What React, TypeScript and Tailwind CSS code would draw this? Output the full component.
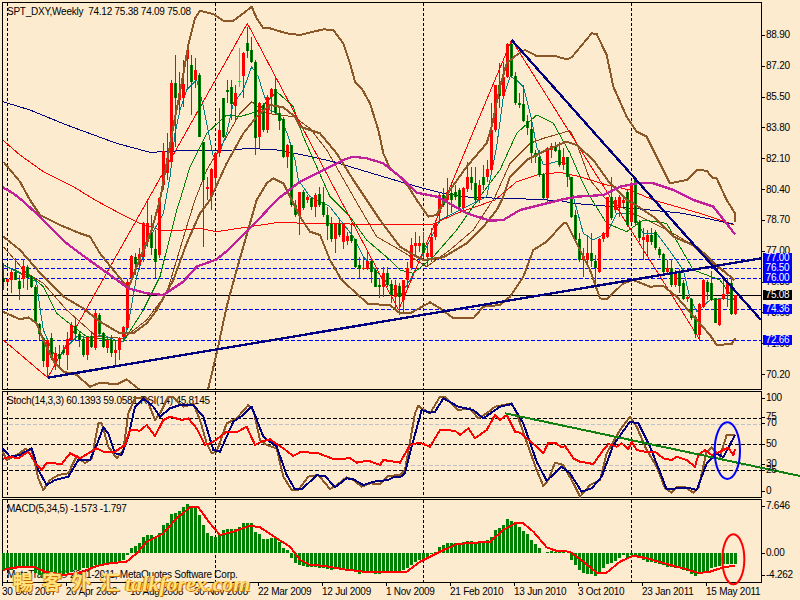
import React from "react";

type C = [number, number, number, number, string];
const early: C[] = ([
[235,245,190,270,"g"],[238,245,235,250,"r"],[215,240,205,280,"r"],[215,240,175,240,"g"],[243,268,225,300,"g"],[197,237,178,265,"r"],[200,235,195,270,"g"],[228,262,225,265,"g"],[262,365,255,370,"g"],[372,402,368,420,"g"],
[415,482,410,500,"g"],[420,500,420,530,"r"],[415,475,400,480,"g"],[460,495,440,510,"r"],[462,477,435,500,"g"],[450,460,435,465,"g"],[418,465,395,510,"r"],[375,420,365,430,"r"],[378,402,355,420,"g"],[402,420,395,440,"g"],
[418,465,410,470,"g"],[412,465,410,480,"r"],[408,440,395,445,"g"],[340,445,330,450,"r"],[345,402,340,405,"g"],[400,440,395,445,"g"],[420,445,410,460,"r"],[420,458,405,470,"g"],[450,458,420,500,"r"],[415,450,410,480,"r"],
[382,412,378,420,"r"],[245,385,238,390,"r"],[168,235,165,240,"r"],[172,192,160,225,"g"],[162,195,145,210,"r"],[70,170,65,185,"r"],[70,125,0,140,"r"],[98,143,45,165,"g"],[148,185,90,235,"g"],
] as C[]).map(([a, b, c, d, e]) => [a + 600, b + 600, c + 600, d + 600, e] as C);

const late: C[] = [
[595,765,590,775,"r"],[452,555,430,570,"r"],[475,520,400,540,"r"],[250,485,240,490,"r"],[250,295,165,440,"g"],[278,300,215,340,"r"],[252,295,180,320,"r"],[150,178,150,270,"r"],[195,245,165,345,"g"],[210,240,175,265,"r"],
[225,410,220,410,"g"],[425,540,425,740,"g"],[560,568,530,600,"r"],[508,590,505,630,"r"],[460,535,455,560,"r"],[390,460,325,470,"r"],[295,410,295,415,"g"],[270,275,240,310,"g"],[262,312,240,360,"g"],[278,318,255,360,"r"],
[243,245,145,260,"l"],[160,228,155,295,"r"],[130,152,80,175,"g"],[150,185,110,190,"g"],[185,415,180,465,"g"],[310,412,305,445,"r"],[315,390,310,395,"g"],[290,390,285,400,"r"],[268,290,265,340,"r"],[268,338,230,345,"g"],
[338,362,325,390,"g"],[358,470,350,475,"g"],[435,470,432,505,"r"],[435,615,435,620,"g"],[615,645,600,650,"g"],[575,645,575,705,"r"],[575,625,570,630,"g"],[590,600,585,610,"r"],[595,620,590,630,"g"],[585,620,580,650,"r"],
[582,615,560,620,"g"],[605,645,560,650,"g"],[645,678,620,720,"g"],[672,718,650,725,"g"],[672,718,670,758,"r"],[672,705,660,710,"g"],[672,725,670,748,"r"],[708,722,695,735,"r"],[705,722,670,730,"g"],[718,800,718,805,"g"],
[795,808,770,835,"g"],[805,807,770,810,"r"],[782,808,755,810,"r"],[782,815,778,850,"g"],[810,860,805,862,"g"],[855,862,835,895,"g"],[818,862,800,890,"r"],[818,855,800,860,"g"],[852,885,840,910,"g"],[855,890,840,925,"r"],
[858,890,850,945,"g"],[840,900,840,935,"r"],[805,840,785,865,"r"],[735,805,715,810,"r"],[730,738,695,765,"r"],[728,738,708,755,"r"],[728,760,695,775,"g"],[760,770,730,800,"r"],[710,770,685,785,"r"],[668,712,660,720,"r"],
[585,640,575,670,"r"],[585,615,565,620,"g"],[575,600,535,650,"r"],[580,600,545,640,"g"],[575,590,555,600,"g"],[570,620,565,625,"g"],[565,625,560,630,"r"],[530,568,485,575,"r"],[530,548,500,570,"g"],[548,600,500,610,"g"],
[555,600,540,610,"r"],[530,555,495,570,"g"],[508,530,480,545,"r"],[390,510,310,515,"r"],[255,390,255,395,"r"],[255,288,190,325,"g"],[232,288,185,292,"r"],[132,232,130,235,"r"],[132,228,120,230,"g"],[228,310,215,315,"g"],
[310,315,280,325,"g"],[312,362,255,365,"g"],[362,385,345,405,"g"],[388,458,355,490,"g"],[458,472,450,490,"g"],[472,525,450,530,"g"],[522,595,520,600,"g"],[445,595,440,605,"r"],[438,450,430,475,"r"],[438,452,425,455,"g"],
[450,495,425,500,"g"],[470,495,445,510,"r"],[472,530,470,560,"g"],[530,650,530,655,"g"],[645,720,630,725,"g"],[718,780,700,785,"g"],[768,780,745,830,"r"],[758,780,705,790,"r"],[760,782,700,800,"g"],[782,805,765,852,"g"],
[718,815,715,818,"r"],[700,718,695,725,"r"],[590,712,590,715,"r"],[590,655,530,660,"g"],[600,630,590,640,"r"],[590,625,585,650,"r"],[600,610,590,620,"r"],[575,675,570,680,"g"],[548,665,545,670,"r"],[540,670,535,675,"g"],
[665,715,660,725,"g"],[712,720,685,780,"r"],[705,725,690,770,"r"],[705,725,685,735,"g"],[695,745,690,750,"g"],[748,765,740,775,"g"],[762,815,760,820,"g"],[805,815,780,825,"r"],[805,855,778,860,"g"],[815,855,810,860,"r"],
[812,858,808,880,"g"],[848,898,840,900,"g"],[892,898,885,905,"r"],[898,955,895,960,"g"],[950,1002,945,1015,"g"],[912,1005,910,1020,"r"],[840,922,838,925,"r"],[845,875,840,900,"g"],[850,900,812,902,"g"],[895,968,893,970,"g"],
[898,975,895,978,"r"],[882,898,840,900,"r"],[850,882,835,922,"r"],[850,942,838,945,"g"],[885,942,885,945,"r"],
];
const candles = [...early, ...late];

const bandUpper = "10,485 60,545 90,600 120,645 180,675 240,700 270,710 300,760 340,810 385,865 410,800 455,690 480,600 520,380 545,250 565,135 585,55 600,32 640,42 670,62 700,62 730,40 755,20 770,55 790,85 810,85 860,100 900,105 970,88 1000,90 1030,130 1050,190 1065,245 1085,265 1110,310 1135,390 1150,460 1170,505 1200,530 1225,560 1250,600 1285,650 1310,645 1350,570 1400,500 1460,430 1475,380 1500,260 1520,190 1550,165 1575,150 1610,168 1665,168 1700,178 1715,172 1750,130 1775,100 1790,102 1820,165 1840,260 1880,350 1910,395 1940,410 1980,490 2010,550 2060,540 2090,510 2120,512 2135,532 2150,535 2180,600 2205,640 2205,665";
const bandMid = "10,710 60,750 130,830 190,890 250,925 300,965 360,1000 400,1000 440,970 470,930 520,840 560,730 600,640 630,600 680,490 730,400 770,350 810,315 850,322 885,350 900,380 960,400 1010,460 1060,540 1100,600 1140,660 1200,740 1250,770 1270,780 1330,772 1400,730 1450,680 1490,630 1510,590 1530,530 1580,480 1640,450 1700,425 1730,435 1780,480 1830,550 1880,600 1900,610 1960,650 2020,710 2090,740 2150,795 2203,840";
const bandLow = "8,935 60,958 85,952 110,970 130,1020 165,1090 190,1115 230,1125 270,1160 300,1148 350,1153 380,1138 420,1170 440,1200 610,1200 625,1165 650,1060 680,920 710,810 770,600 800,550 820,535 850,550 870,590 900,650 930,695 960,705 990,780 1025,840 1080,890 1105,912 1170,915 1200,940 1230,940 1290,907 1320,925 1360,955 1420,955 1450,920 1500,915 1530,890 1570,830 1600,750 1640,725 1690,670 1700,670 1730,730 1770,810 1800,895 1820,898 1870,850 1900,840 1950,860 1990,858 2030,890 2090,960 2130,1005 2150,1035 2195,1032 2206,1015";
const magenta = "8,562 40,580 65,600 120,650 200,730 260,775 330,825 385,865 440,880 490,885 550,845 590,800 650,778 690,745 760,675 830,600 900,545 970,510 1030,480 1060,470 1100,475 1150,490 1200,530 1250,578 1310,590 1330,600 1400,640 1470,662 1510,660 1560,630 1620,615 1680,600 1730,590 1810,585 1860,560 1920,548 1960,550 2020,570 2080,600 2140,620 2205,703";
const navyThin = "8,305 90,330 200,375 350,430 450,457 550,452 700,450 745,445 830,450 900,463 1000,485 1100,515 1200,545 1270,565 1330,580 1410,592 1610,598 1680,602 1720,610 1900,625 2050,640 2203,673";
const redThin = "8,420 60,465 130,515 220,560 285,600 350,635 420,670 480,690 550,690 600,685 650,695 750,680 830,668 950,670 1200,675 1300,672 1370,640 1485,600 1550,545 1610,525 1680,517 1740,530 1820,555 1890,570 1960,600 2100,640 2203,675";
const zigzag = "10,1020 143,1133 742,70 1196,930 1535,120 2100,1020";
const teal = "10,795 40,810 110,845 115,890 130,990 160,1060 180,1070 200,1040 230,1010 270,1012 310,1005 345,1020 370,1025 385,970 410,830 440,730 490,640 510,530 525,400 540,330 560,270 590,240 610,320 640,470 660,455 680,400 700,310 730,270 755,200 775,230 790,280 810,330 840,345 865,410 885,480 895,540 930,590 990,620 1005,640 1060,710 1090,770 1130,815 1200,890 1230,840 1290,720 1320,660 1460,590 1490,440 1510,290 1530,230 1550,240 1570,260 1595,360 1610,440 1630,495 1670,485 1700,490 1720,590 1750,700 1780,720 1820,700 1850,640 1900,640 1930,700 1970,700 2000,740 2050,810 2070,895 2090,935 2130,900 2170,895 2203,900";
const greenThin = "10,795 100,835 130,860 170,940 220,980 260,1010 370,1025 430,930 480,830 530,630 540,600 570,500 620,400 680,345 720,350 770,335 830,275 880,320 910,410 950,500 990,590 1050,650 1100,720 1170,780 1200,810 1240,820 1300,770 1370,690 1440,590 1500,510 1550,400 1610,345 1660,370 1710,460 1740,530 1770,590 1820,670 1880,695 1930,660 2000,670 2040,740 2080,810 2160,840 2203,900";
const brownThin = "10,740 80,820 130,850 200,930 290,1010 370,1015 440,960 500,880 560,680 585,600 620,510 680,410 720,340 755,305 800,340 880,350 930,385 980,450 1020,520 1060,590 1130,710 1200,750 1280,800 1350,750 1420,690 1485,590 1530,490 1590,430 1630,415 1710,392 1730,430 1770,540 1820,600 1840,610 1940,660 2010,695 2070,730 2150,800 2203,840";

const stochBrown = "8,185 20,210 50,195 75,178 95,180 115,265 130,300 150,270 175,255 205,250 230,198 255,220 275,205 295,100 305,100 325,170 350,205 370,180 385,70 405,25 440,25 465,90 480,70 505,22 520,22 550,50 580,42 600,90 620,160 635,190 650,185 680,100 710,85 745,45 760,60 780,150 800,165 830,175 850,260 875,300 895,300 925,260 955,255 990,297 1010,285 1040,262 1060,270 1085,290 1110,280 1140,283 1165,258 1200,255 1215,240 1245,70 1255,47 1265,55 1290,70 1320,20 1335,20 1375,60 1410,55 1435,85 1460,70 1485,50 1535,40 1550,70 1585,170 1610,240 1630,288 1645,270 1665,218 1690,225 1720,280 1740,320 1770,285 1800,270 1820,190 1860,120 1890,80 1910,110 1940,180 1970,230 1995,295 2015,308 2030,292 2055,292 2080,308 2095,295 2120,185 2135,172 2160,200 2180,135 2205,135";
const stochNavy = "8,175 30,200 60,195 95,175 115,240 140,285 165,270 205,260 235,210 270,210 290,165 310,112 325,130 345,190 365,195 385,140 405,50 430,25 460,50 480,80 510,55 540,45 580,45 610,80 640,180 660,185 700,95 730,75 755,50 790,140 830,170 860,255 885,298 905,298 950,256 975,258 1005,292 1040,265 1060,268 1090,285 1120,275 1165,270 1180,262 1200,262 1215,250 1235,170 1265,60 1290,68 1305,65 1330,25 1375,50 1420,60 1450,85 1500,50 1535,42 1570,100 1610,215 1640,272 1685,230 1710,250 1745,305 1775,295 1805,260 1840,165 1890,95 1915,100 1950,170 2000,298 2030,295 2070,295 2090,300 2120,220 2150,190 2170,202 2205,135";
const rsi = "8,207 30,200 55,205 85,185 110,225 125,240 140,218 185,222 210,190 240,205 290,175 310,185 345,185 375,165 390,120 420,122 440,105 465,138 490,90 510,80 545,90 565,85 590,115 615,165 640,155 680,125 710,127 740,110 765,165 785,155 810,148 850,175 880,198 900,187 950,188 1000,207 1050,205 1070,218 1105,212 1140,225 1150,210 1200,218 1230,165 1260,158 1290,170 1320,120 1365,122 1380,135 1405,115 1425,145 1460,120 1485,75 1500,90 1520,75 1545,125 1560,128 1610,170 1630,190 1645,158 1665,158 1685,172 1695,168 1720,205 1740,215 1780,222 1810,180 1825,162 1850,170 1865,160 1885,178 1895,155 1910,180 1935,185 1965,185 1990,205 2015,210 2030,200 2060,210 2085,230 2095,195 2115,180 2135,195 2160,185 2185,173 2200,195 2205,178";
const signal = "8,540 40,533 100,530 135,545 190,555 240,548 290,528 330,520 380,515 410,490 440,455 490,430 530,385 570,352 595,352 630,400 660,435 700,425 750,407 780,412 830,445 870,470 900,510 930,525 970,527 1030,538 1100,546 1200,545 1220,545 1260,515 1320,485 1370,462 1470,455 1510,420 1545,400 1570,400 1600,425 1640,472 1670,483 1710,485 1750,515 1790,548 1820,548 1860,515 1900,497 1940,505 2000,522 2050,535 2095,549 2130,545 2170,532 2205,527";

const hist = [540,540,540,535,530,530,530,535,550,555,565,565,565,565,560,555,550,545,540,540,535,535,530,525,525,525,520,520,520,520,510,495,475,468,458,440,435,435,440,430,405,400,372,368,362,352,342,350,352,375,405,430,438,440,435,420,416,416,416,412,400,400,400,425,432,447,447,443,445,455,475,480,505,520,525,527,530,530,530,533,533,537,540,537,537,537,540,540,545,551,548,545,548,553,553,548,545,548,548,548,540,535,525,515,510,507,503,493,485,470,465,460,458,458,458,455,452,452,455,455,455,450,440,420,415,405,387,392,400,412,422,432,450,462,475,488,487,482,485,485,485,488,510,525,540,548,553,553,557,545,535,522,518,512,505,495,503,495,500,503,510,515,515,520,522,525,530,530,535,535,540,543,552,557,550,547,543,535,530,528,522,522,522,522];

const prices = ["88.90","87.20","85.50","83.80","82.10","80.40","78.70","77.00","75.30","73.60","71.90","70.20"];
const dates = ["30 Dec 2007","20 Apr 2008","10 Aug 2008","30 Nov 2008","22 Mar 2009","12 Jul 2009","1 Nov 2009","21 Feb 2010","13 Jun 2010","3 Oct 2010","23 Jan 2011","15 May 2011"];
const vx = [22, 646, 1270, 1894];
const brown = "#8b5726";

function Line({ pts, color, w }: { pts: string; color: string; w: number }) {
  return <polyline points={pts} fill="none" stroke={color} strokeWidth={w} strokeLinejoin="round" shapeRendering="crispEdges" />;
}
function VDash({ y1, y2 }: { y1: number; y2: number }) {
  return <>{vx.map((x) => <line key={x} x1={x + 1} x2={x + 1} y1={y1} y2={y2} stroke="#000" strokeWidth={3} strokeDasharray="9 6" shapeRendering="crispEdges" />)}</>;
}
function HDash({ y, color }: { y: number; color: string }) {
  return <line x1={9} x2={2283} y1={y} y2={y} stroke={color} strokeWidth={3} strokeDasharray="12 6" shapeRendering="crispEdges" />;
}
function Flag({ className, children }: { className: string; children: string }) {
  return <div className={`absolute left-[1px] w-[29px] h-[10px] flex items-center justify-center text-white leading-none ${className}`}>{children}</div>;
}
function Tick({ className, children }: { className: string; children: string }) {
  return (
    <div className={`absolute left-0 flex items-center gap-[1px] h-[12px] leading-none ${className}`}>
      <span className="w-[3px] h-px bg-black" />
      <span>{children}</span>
    </div>
  );
}

export default function App() {
  return (
    <div className="relative w-[800px] h-[600px] overflow-hidden bg-[#fcebcf] pl-[2px] pt-[2px] flex flex-col text-black text-[10px] tracking-[-0.25px] font-['Liberation_Sans',sans-serif]">
      {/* Price pane */}
      <div className="flex h-[388px] shrink-0">
        <div className="relative w-[760px] border border-black">
          <div className="pl-[4px] pt-[2px] leading-[13px] whitespace-pre">SPT_DXY,Weekly  74.12 75.38 74.09 75.08</div>
          <svg className="absolute inset-0 block" width={758} height={386} viewBox="9 9 2274 1158">
            <VDash y1={9} y2={1167} />
            {[778, 805, 836, 928, 1021].map((y) => <HDash key={y} y={y} color="#0000ff" />)}
            <line x1={9} x2={2283} y1={886} y2={886} stroke="#000" strokeWidth={3} shapeRendering="crispEdges" />
            <Line pts={redThin} color="#ff0000" w={3} />
            <Line pts={navyThin} color="#000080" w={3} />
            <Line pts={brownThin} color="#8b4513" w={3} />
            <Line pts={greenThin} color="#008000" w={3} />
            <Line pts={teal} color="#008080" w={3} />
            <Line pts={zigzag} color="#ff0000" w={3} />
            {candles.map(([t, b, h, l, c], k) => {
              const x = 9 + 12 * k;
              const main = c === "r" ? "#ff0000" : c === "l" ? "#00ff00" : "#008000";
              return (
                <g key={k} shapeRendering="crispEdges">
                  <rect x={x} y={h} width={3} height={l - h} fill={main} />
                  <rect x={x - 3} y={t} width={9} height={Math.max(b - t, 3)} fill={main} />
                  {c === "g" && <rect x={x} y={t} width={3} height={Math.max(b - t, 3)} fill="#003000" />}
                </g>
              );
            })}
            <Line pts={bandUpper} color={brown} w={6} />
            <Line pts={bandMid} color={brown} w={6} />
            <Line pts={bandLow} color={brown} w={6} />
            <Line pts={magenta} color="#c0209a" w={7} />
            <Line pts="143,1133 2283,775" color="#000080" w={7} />
            <Line pts="1535,120 2283,960" color="#000080" w={7} />
          </svg>
        </div>
        <div className="relative flex-1 flex flex-col pt-[18px]">
          {prices.map((p) => (
            <div key={p} className="h-[32px] flex items-center gap-[1px] leading-none">
              <span className="w-[3px] h-px bg-black" />
              <span>{p}</span>
            </div>
          ))}
          <Flag className="top-[251px] bg-[#0000ff]">77.00</Flag>
          <Flag className="top-[261px] bg-[#0000ff]">76.50</Flag>
          <Flag className="top-[271px] bg-[#0000ff]">76.00</Flag>
          <Flag className="top-[288px] bg-black">75.08</Flag>
          <Flag className="top-[302px] bg-[#0000ff]">74.36</Flag>
          <Flag className="top-[333px] bg-[#0000ff]">72.66</Flag>
        </div>
      </div>

      {/* Oscillator pane */}
      <div className="flex h-[107px] mt-px shrink-0">
        <div className="relative w-[760px] border border-black">
          <div className="pl-[4px] pt-[2px] leading-[13px] whitespace-pre">Stoch(14,3,3) 60.1393 59.0581 RSI(14) 45.8145</div>
          <svg className="absolute inset-0 block overflow-visible" width={758} height={105} viewBox="9 6 2274 315">
            <HDash y={103} color="#c0c0c8" />
            <HDash y={226} color="#c0c0c8" />
            <HDash y={85} color="#000" />
            <HDash y={163} color="#000" />
            <HDash y={240} color="#000" />
            <VDash y1={6} y2={321} />
            <Line pts={stochBrown} color={brown} w={6} />
            <Line pts={stochNavy} color="#000080" w={6} />
            <Line pts={rsi} color="#ff0000" w={6} />
            <Line pts="1516,70 2400,258" color="#108010" w={6} />
            <ellipse cx={2182} cy={182} rx={38} ry={85} fill="none" stroke="#0000ff" strokeWidth={6} />
          </svg>
        </div>
        <div className="relative flex-1">
          <Tick className="top-[1px]">100</Tick>
          <Tick className="top-[20px]">75</Tick>
          <Tick className="top-[26px]">70</Tick>
          <Tick className="top-[47px]">50</Tick>
          <Tick className="top-[67px]">30</Tick>
          <Tick className="top-[73px]">25</Tick>
          <Tick className="top-[94px]">0</Tick>
        </div>
      </div>

      {/* MACD pane */}
      <div className="flex h-[84px] mt-px shrink-0">
        <div className="relative w-[760px] border border-black">
          <div className="pl-[4px] pt-[2px] leading-[13px] whitespace-pre">MACD(5,34,5) -1.573 -1.797</div>
          <div className="absolute left-[4px] bottom-[1px] leading-[13px] whitespace-pre">MetaTrader, © 2001-2011, MetaQuotes Software Corp.</div>
          <svg className="absolute inset-0 block overflow-visible" width={758} height={82} viewBox="9 330 2274 246">
            <VDash y1={330} y2={576} />
            {hist.map((v, k) => (
              <rect key={k} x={6 + 12 * k} y={Math.min(v, 490)} width={9} height={Math.abs(v - 490)} fill="#008000" shapeRendering="crispEdges" />
            ))}
            <Line pts={signal} color="#ff0000" w={6} />
            <ellipse cx={2200} cy={508} rx={33} ry={75} fill="none" stroke="#ff0000" strokeWidth={6} />
          </svg>
        </div>
        <div className="relative flex-1">
          <Tick className="top-[1px]">7.646</Tick>
          <Tick className="top-[48px]">0.00</Tick>
          <Tick className="top-[70px]">-4.262</Tick>
        </div>
      </div>

      {/* Time axis */}
      <div className="flex">
        {dates.map((d) => (
          <div key={d} className="w-[64px] shrink-0 flex flex-col leading-none">
            <span className="w-px h-[3px] bg-black" />
            <span className="mt-[1px] whitespace-nowrap">{d}</span>
          </div>
        ))}
      </div>

      {/* Watermark */}
      <div className="absolute left-[13px] top-[565px] flex items-end whitespace-nowrap text-[#ffe27a] tracking-normal [text-shadow:1px_1px_0_#c86a00,-1px_0_0_#d98a10]">
        <span className="text-[20px] leading-[33px] tracking-[9px] font-bold font-['Noto_Sans_CJK_SC',serif]">暢客外汇</span>
        <span className="-ml-[4px] text-[22px] leading-[28px] italic font-bold font-['Liberation_Serif',serif]">talkforex.com</span>
      </div>
    </div>
  );
}
